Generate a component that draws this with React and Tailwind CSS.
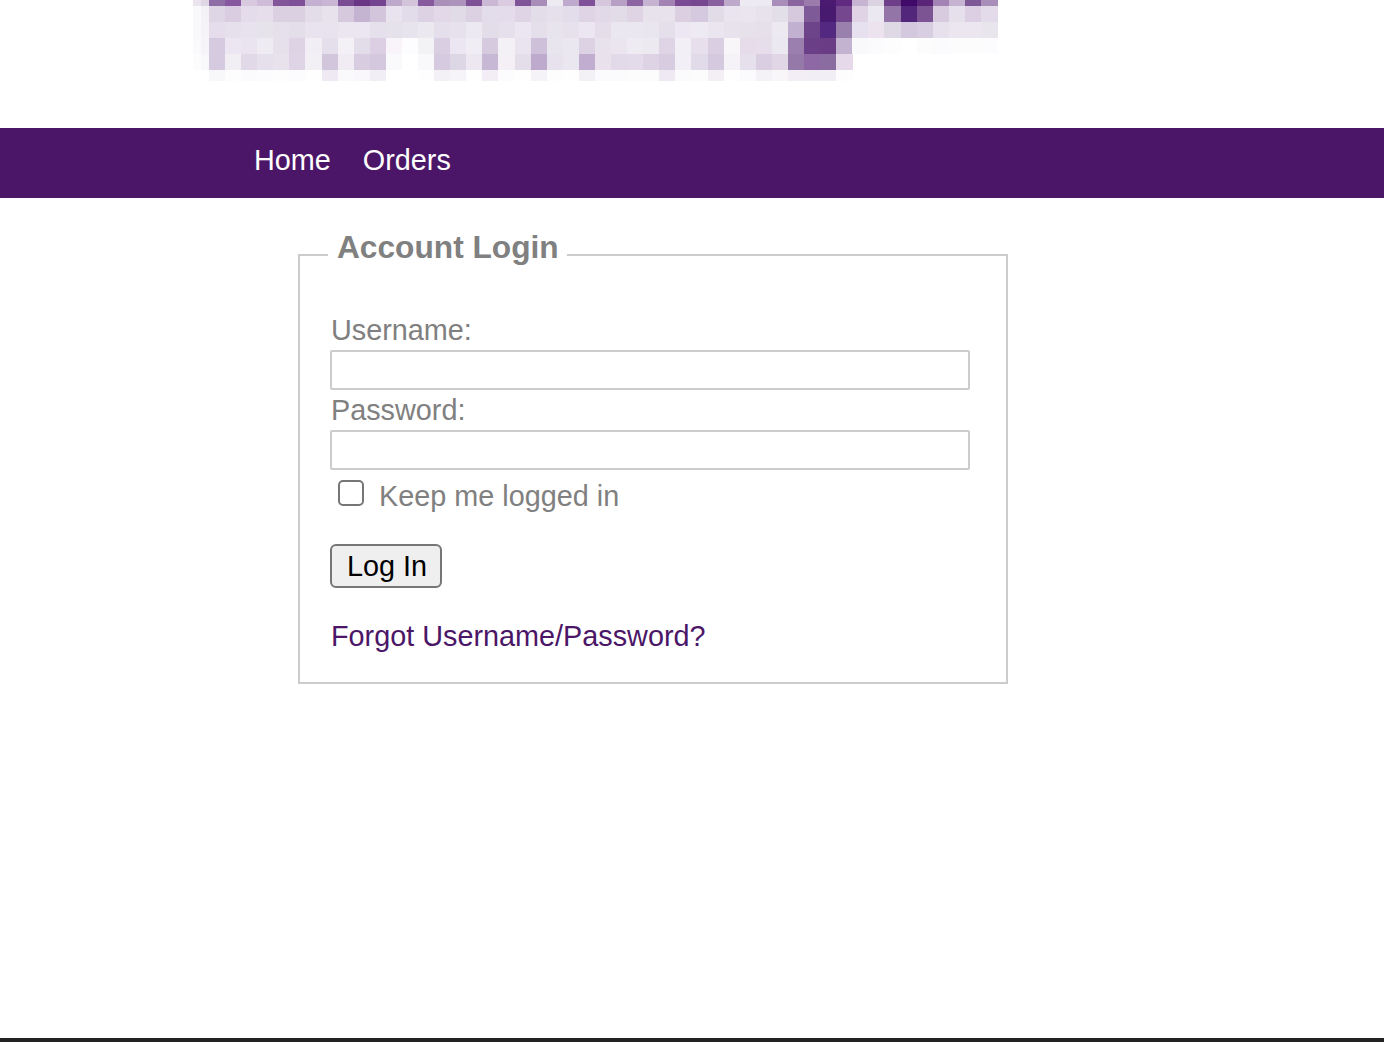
const rows = [
  { y: 0, h: 6, c: "8f6ea6 87589f d9c9df cfbcd9 82559a 7f5098 c4b0d0 c9b6d4 7a4c93 6a3585 744490 bfa9cb d3c3db 875a9e ab90ba ad92bc 7e5096 cbb8d5 dacbe0 7f5499 a88db9 eeeaf1 bfa9cc 7f4f97 d6c6de b79fc6 8b64a1 c6b3d2 a283b3 7b4a94 764690 8a5f9f bfa9cb eeeaf2 eeeaf2 aa8eba 8a649f 9a7bac 4a1a70 5f2a80 c6b4d2 dbd2e2 6e3f88 3f0a68 5a2579 a283b4 c6b3d2 7e5796 a98eb9" },
  { y: 6, h: 16, c: "ded6e4 dacde1 e4dcea e6dfeb dbcfe2 dbd0e2 e3ddea e8e2ed d6c9de c5b3d2 d2c5dc e8e3ef e2dcea dcd2e4 e2d8e8 e1dbe8 dcd0e3 e3dcea e4dcea dfd4e6 e2dde9 e6e0ec e3dcea dfd4e6 e1d9e8 e2dce8 dfd4e4 e8e2ed e8e2ed dccfe2 d5c9df e1dce8 e9e4ef ebe5f0 e8e2ed e2dfe9 d6c9dd 7f5a98 47196f 74478f e0d3e6 ece8f1 9375a8 52267a 7c5393 d8cadf e6e0ec dccfe3 e3dbe9" },
  { y: 22, h: 16, c: "e5ddeb e6dfec e8e2ee e6e4ea e6e0ec e4deea e8e3ee e8e3ee ebe6f0 ebe6f1 e5e0ec e6e2ec e7e4ee ebe9ef e5dfeb e7e1ed ede9f2 e3ddea e6e0ec ebe6f1 e5dfeb e8e4ed e7e1ee ebe6f1 e5dde9 ebe7f0 ebe7f1 eae6ef e5dfeb ece7f2 eeeaf3 ebe5f0 e7e2ec e7e1ec e6e0eb ece9f0 c2b0d1 6d4389 522880 9a80ad e7e0ee ece3ef dfd9e6 d3c8de d8cee1 e7e1ed ebe6ef ebe6f0 e9e5ed" },
  { y: 38, h: 16, c: "d5cadf ebe6f1 e9e4f0 eeebf2 e6e0ec ddd3e5 f1eef5 e5dfeb f3f1f6 e3ddea dccfe3 f8f4fa fdfcfe f3f2f5 d9cee2 ebe6f2 f0edf4 d6cbde f4f1f6 e9e4ef cdc0d8 e9e5ef ebe7f1 dcd2e3 e8e2ed ebe5f0 eeebf3 ede9f1 dfd4e5 f2f0f6 e7e0ec dacee3 f8f6f9 e7dcea e6dfeb ece8f1 9b80af 6b3f87 6a3c86 c4b2d1 f9f8fb fbfafd fdfdfe ffffff fcfcfd fbfbfd fcfcfd fcfcfd fcfcfe" },
  { y: 54, h: 16, c: "d5cadf f1eff4 e1d9e8 e6e0ec e8e2ed dfd4e5 f2f0f5 d2c6dd f1ecf3 d8cde0 d4c8de fafafc ffffff f9f8fb d5cadf ddd6e4 ece7f1 c7b8d5 f4f0f5 e3deea bdaacd e8e2ee ebe7f1 c0adcf e9e2ed e2dae8 e3dbe9 ddd3e4 d8cce1 f2f0f6 e1dae8 d5c9df f6f3f8 e6e0ec d9cee2 e0d6e6 9479a9 8d68a4 8a6ca0 e5d9ea" },
  { y: 70, h: 11, c: "f8f8fa fdfdfe fbfbfd fcfcfe fdfdfe fcfbfd fefefe efe9f3 faf9fc f9f7fb f1eef5 ffffff ffffff fefefe f3f0f6 f6f4f8 fefefe f3eef5 fcfbfd fefefe f6f3f8 fdfdfe fefefe f3f1f6 fbfafc fbfbfd fcfcfd fcfcfd efe9f3 fbfbfd fcfcfd f3eff5 fefefe fbfafc f5f2f7 f8f6f9 f3eef5 f2eef5 f2eef5 fdfdfd" },
];
const edge = [
  { y: 0, h: 6, a: "eae4ee", b: "e0d6e6" },
  { y: 6, h: 16, a: "f9f8fb", b: "f4f2f6" },
  { y: 22, h: 16, a: "f9f8fb", b: "f5f3f7" },
  { y: 38, h: 16, a: "fafafc", b: "f6f4f8" },
  { y: 54, h: 16, a: "fcfcfd", b: "f8f7fa" },
];
const cellW = 788 / 49;

function Logo() {
  return (
    <svg width="1384" height="128" viewBox="0 0 1384 128" className="block" shapeRendering="crispEdges" aria-label="Logo">
      {edge.map((r) => (
        <g key={r.y}>
          <rect x="193" y={r.y} width="8" height={r.h} fill={`#${r.a}`} />
          <rect x="201" y={r.y} width="8" height={r.h} fill={`#${r.b}`} />
        </g>
      ))}
      {rows.map((r) =>
        r.c.split(" ").map((color, i) => (
          <rect key={`${r.y}-${i}`} x={209 + i * cellW} y={r.y} width={cellW + 0.5} height={r.h} fill={`#${color}`} />
        ))
      )}
    </svg>
  );
}

export default function App() {
  return (
    <div className="flex min-h-[1042px] flex-col bg-white font-['Liberation_Sans',Arial,sans-serif] text-[28.8px]">
      <header className="h-[128px]">
        <Logo />
      </header>
      <nav className="flex h-[70px] items-start gap-[32px] bg-[#4b1667] pl-[254px] pt-[14px] leading-[36px] text-white">
        <a href="#">Home</a>
        <a href="#">Orders</a>
      </nav>
      <main className="flex-1 pl-[298px] pt-[31px]">
        <fieldset className="h-[455px] w-[710px] rounded-none border-2 border-[#ccc] px-[30px] text-[#808080]">
          <legend className="ml-[-2px] pb-[16px] pl-[9px] pr-[8px] text-[31.68px] font-bold leading-[36px]">Account Login</legend>
          <form className="pt-[29px]">
            <label htmlFor="username" className="block h-[40px] pl-[1px] leading-[40px]">Username:</label>
            <input id="username" type="text" className="block h-[40px] w-[640px] rounded-[2px] border-2 border-[#ccc] bg-white" />
            <label htmlFor="password" className="block h-[40px] pl-[1px] leading-[40px]">Password:</label>
            <input id="password" type="password" className="block h-[40px] w-[640px] rounded-[2px] border-2 border-[#ccc] bg-white" />
            <div className="flex h-[54px] items-start pl-[8px] pt-[10px]">
              <input id="keep" type="checkbox" className="h-[26px] w-[26px] appearance-none rounded-[5px] border-2 border-[#767676] bg-white" />
              <label htmlFor="keep" className="ml-[15px] leading-[33px]">Keep me logged in</label>
            </div>
            <button type="button" className="mt-[20px] block h-[44px] w-[112px] rounded-[6px] border-2 border-[#767676] bg-[#efefef] pl-[2px] leading-[40px] text-black">Log In</button>
            <a href="#" className="mt-[28px] block pl-[1px] leading-[40px] text-[#4b1667]">Forgot Username/Password?</a>
          </form>
        </fieldset>
      </main>
      <footer className="h-[4px] bg-[#222]" />
    </div>
  );
}
